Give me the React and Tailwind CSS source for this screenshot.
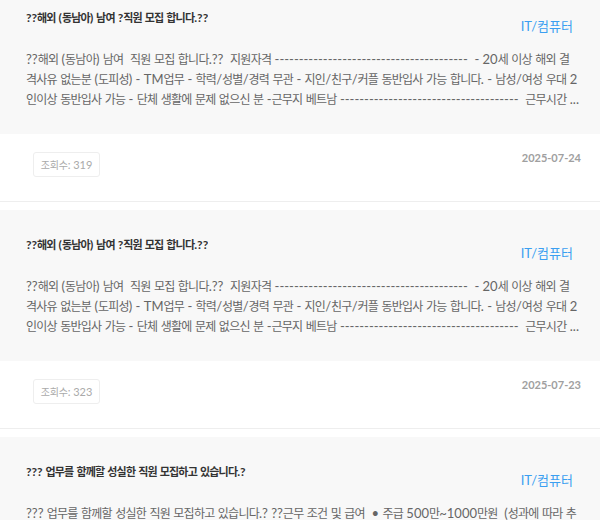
const HANGUL = /([\uAC00-\uD7A3]+)/;

function K({ text, tr }) {
  const parts = text.split(HANGUL);
  return (
    <>
      {parts.map((p, i) =>
        HANGUL.test(p) ? (
          <span key={i} className={tr}>
            {p}
          </span>
        ) : (
          <span key={i}>{p}</span>
        )
      )}
    </>
  );
}

const dA = "-".repeat(40);
const dB = "-".repeat(37);

const lines1 = [
  `??해외 (동남아) 남여\u00a0\u00a0직원 모집 합니다.??\u00a0\u00a0지원자격 ${dA}\u00a0\u00a0- 20세 이상 해외 결`,
  `격사유 없는분 (도피성) - TM업무 - 학력/성별/경력 무관 - 지인/친구/커플 동반입사 가능 합니다. - 남성/여성 우대 2`,
  `인이상 동반입사 가능 - 단체 생활에 문제 없으신 분 -근무지 베트남 ${dB}\u00a0\u00a0근무시간 ...`,
];

const lines3 = [
  `??? 업무를 함께할 성실한 직원 모집하고 있습니다.? ??근무 조건 및 급여\u00a0\u00a0• 주급 500만~1000만원\u00a0\u00a0(성과에 따라 추`,
  `가 지급) • 숙소 및 식사 제공 • 항공권 지원 • 비자 및 체류 지원 • 주 6일 근무 • 근무지 캄보디아 프놈펜`,
  `${"-".repeat(40)}\u00a0\u00a0지원 방법 ...`,
];

const items = [
  { title: "??해외 (동남아) 남여 ?직원 모집 합니다.??", lines: lines1, views: 319, date: "2025-07-24" },
  { title: "??해외 (동남아) 남여 ?직원 모집 합니다.??", lines: lines1, views: 323, date: "2025-07-23" },
  { title: "??? 업무를 함께할 성실한 직원 모집하고 있습니다.?", lines: lines3, views: 301, date: "2025-07-22" },
];

function Card({ item }) {
  return (
    <div className="mb-2 border-b border-[#eeeeee] bg-white">
      <div className="bg-[#f8f8f8] pl-[26px] pr-[18px] pt-[26px] pb-[25px]">
        <div className="flex items-start justify-between">
          <div className="h-[18px] overflow-x-clip whitespace-nowrap text-[12px] leading-[18px] font-bold text-[#333333]">
            <K text={item.title} tr="text-[11px] tracking-[-0.8px]" />
          </div>
          <div className="mt-[8px] pr-[9px] text-[13px] leading-[18px] text-[#3b9ff1]">IT/컴퓨터</div>
        </div>
        <div className="mt-[14px] text-[13px] leading-[20px] text-[#666666]">
          {item.lines.map((l, i) => (
            <div key={i} className="h-[20px] overflow-x-clip whitespace-nowrap">
              <K text={l} tr="text-[12px] tracking-[-0.75px]" />
            </div>
          ))}
        </div>
      </div>
      <div className="flex items-start justify-between pl-[33px] pr-[19px] pt-[18px] pb-[24px]">
        <div className="flex h-[25px] w-[67px] items-center justify-center rounded-[3px] border border-[#eeeeee] text-[11px] leading-[14px] text-[#aaaaaa]">
          <K text={`조회수: ${item.views}`} tr="text-[10px] tracking-[-0.2px]" />
        </div>
        <div className="mt-[-2px] text-[11px] font-bold text-[#a0a0a0]">{item.date}</div>
      </div>
    </div>
  );
}

export default function App() {
  return (
    <div
      className="h-[520px] overflow-hidden bg-white"
      style={{ fontFamily: 'Lato, "Noto Sans CJK KR", sans-serif' }}
    >
      <div className="-mt-[17px]">
        {items.map((it, i) => (
          <Card key={i} item={it} />
        ))}
      </div>
    </div>
  );
}
